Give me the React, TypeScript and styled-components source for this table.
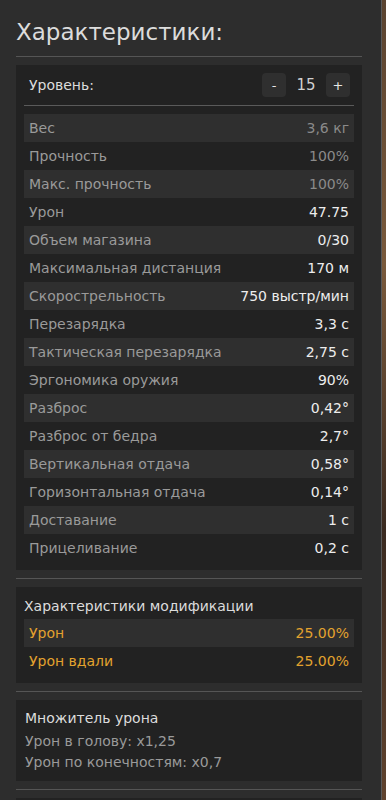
import React from 'react';
import styled, { createGlobalStyle } from 'styled-components';

const GlobalStyle = createGlobalStyle`
  html, body {
    margin: 0;
    padding: 0;
    background: linear-gradient(180deg, #5a4330 0%, #7a5a3c 30%, #3a2a20 60%, #6b4a32 100%);
    font-family: 'DejaVu Sans', 'Liberation Sans', sans-serif;
  }
`;

const Panel = styled.div`
  width: 346px;
  min-height: 800px;
  padding: 0 19px 0 16px;
  background: #2d2d2d;
  border-right: 1px solid #5a5a5a;
  box-sizing: content-box;
  overflow: hidden;
`;

const Title = styled.h1`
  margin: 0;
  padding: 18px 0 10px;
  font-size: 23px;
  line-height: 28px;
  font-weight: 400;
  color: #dcdcdc;
`;

const Divider = styled.div`
  height: 1px;
  background: #555;
  margin: 0 0 8px;
`;

const Card = styled.section`
  background: #222;
  padding: 8px;
  margin-bottom: 8px;
`;

const LevelRow = styled.div`
  display: flex;
  align-items: center;
  justify-content: space-between;
  height: 24px;
  padding: 0 4px 0 5px;
`;

const LevelLabel = styled.span`
  font-size: 14px;
  color: #dcdcdc;
`;

const Stepper = styled.div`
  display: flex;
  align-items: center;
`;

const StepButton = styled.button`
  width: 24px;
  height: 24px;
  border: none;
  border-radius: 4px;
  background: #2f2f2f;
  color: #e6e6e6;
  font-family: inherit;
  font-size: 13px;
  padding: 0;
  display: flex;
  align-items: center;
  justify-content: center;
`;

const LevelValue = styled.span`
  width: 40px;
  text-align: center;
  font-size: 15px;
  color: #d0d0d0;
`;

const InnerDivider = styled.div`
  height: 1px;
  background: #5a5a5a;
  margin: 8px 0;
`;

const StatRow = styled.div<{ $striped: boolean }>`
  display: flex;
  align-items: center;
  justify-content: space-between;
  height: 28px;
  padding: 0 5px;
  background: ${p => (p.$striped ? '#2f2f2f' : 'transparent')};
  font-size: 14px;
`;

const StatLabel = styled.span<{ $accent?: boolean }>`
  color: ${p => (p.$accent ? '#e3a22e' : '#9a9a9a')};
`;

const StatValue = styled.span<{ $muted?: boolean; $accent?: boolean }>`
  color: ${p => (p.$accent ? '#e3a22e' : p.$muted ? '#8a8a8a' : '#ededed')};
  white-space: nowrap;
`;

const CardTitle = styled.div`
  height: 24px;
  line-height: 22px;
  font-size: 14px;
  color: #dcdcdc;
`;

const MultTitle = styled.div`
  padding-left: 1px;
  height: 20px;
  line-height: 20px;
  font-size: 14px;
  color: #dcdcdc;
  margin-bottom: 3px;
`;

const MultLine = styled.div`
  padding-left: 1px;
  height: 21px;
  line-height: 21px;
  font-size: 14px;
  color: #9a9a9a;
`;

const EmptyCard = styled(Card)`
  height: 60px;
`;

type Stat = { label: string; value: string; muted?: boolean };

const stats: Stat[] = [
  { label: 'Вес', value: '3,6 кг', muted: true },
  { label: 'Прочность', value: '100%', muted: true },
  { label: 'Макс. прочность', value: '100%', muted: true },
  { label: 'Урон', value: '47.75' },
  { label: 'Объем магазина', value: '0/30' },
  { label: 'Максимальная дистанция', value: '170 м' },
  { label: 'Скорострельность', value: '750 выстр/мин' },
  { label: 'Перезарядка', value: '3,3 с' },
  { label: 'Тактическая перезарядка', value: '2,75 с' },
  { label: 'Эргономика оружия', value: '90%' },
  { label: 'Разброс', value: '0,42°' },
  { label: 'Разброс от бедра', value: '2,7°' },
  { label: 'Вертикальная отдача', value: '0,58°' },
  { label: 'Горизонтальная отдача', value: '0,14°' },
  { label: 'Доставание', value: '1 с' },
  { label: 'Прицеливание', value: '0,2 с' },
];

const modStats: Stat[] = [
  { label: 'Урон', value: '25.00%' },
  { label: 'Урон вдали', value: '25.00%' },
];

export default function App() {
  return (
    <>
      <GlobalStyle />
      <Panel>
        <Title>Характеристики:</Title>
        <Divider />
        <Card>
          <LevelRow>
            <LevelLabel>Уровень:</LevelLabel>
            <Stepper>
              <StepButton>-</StepButton>
              <LevelValue>15</LevelValue>
              <StepButton>+</StepButton>
            </Stepper>
          </LevelRow>
          <InnerDivider />
          {stats.map((s, i) => (
            <StatRow key={s.label} $striped={i % 2 === 0}>
              <StatLabel>{s.label}</StatLabel>
              <StatValue $muted={s.muted}>{s.value}</StatValue>
            </StatRow>
          ))}
        </Card>
        <Divider />
        <Card>
          <CardTitle>Характеристики модификации</CardTitle>
          {modStats.map((s, i) => (
            <StatRow key={s.label} $striped={i % 2 === 0}>
              <StatLabel $accent>{s.label}</StatLabel>
              <StatValue $accent>{s.value}</StatValue>
            </StatRow>
          ))}
        </Card>
        <Divider />
        <Card>
          <MultTitle>Множитель урона</MultTitle>
          <MultLine>Урон в голову: x1,25</MultLine>
          <MultLine>Урон по конечностям: x0,7</MultLine>
        </Card>
        <Divider />
        <EmptyCard />
      </Panel>
    </>
  );
}
